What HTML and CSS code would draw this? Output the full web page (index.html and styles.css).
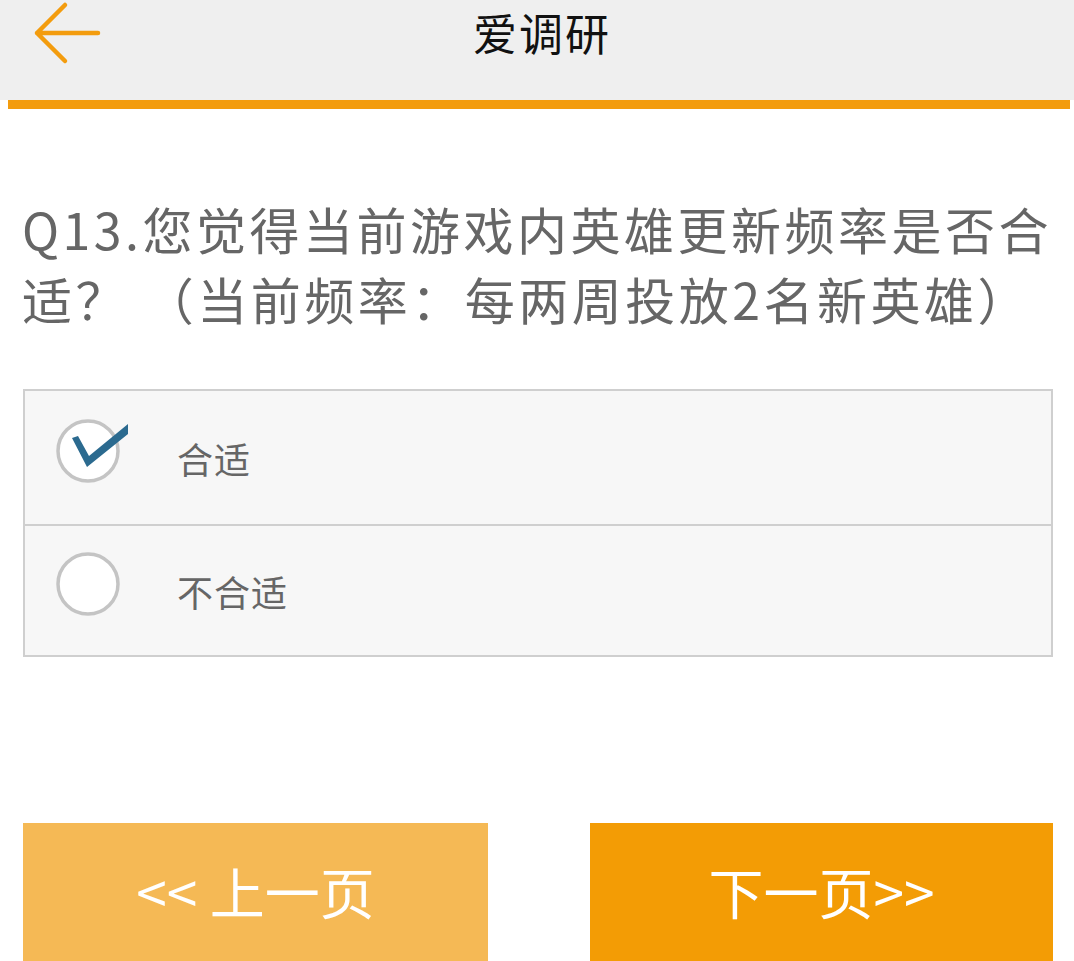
FILE: index.html
```html
<!DOCTYPE html>
<html lang="zh-CN">
<head>
  <meta name="viewport" content="width=device-width, initial-scale=1.0" />
  <title>爱调研</title>
  <link rel="stylesheet" href="styles.css">
</head>
<body>

  <div class="topbar">
    <a class="back" href="#">
      <svg width="80" height="70" viewBox="0 0 80 70">
        <path d="M34 5 L6 33 L34 61 M6 33 L67 33" fill="none" stroke="#f39c0e" stroke-width="4.5" stroke-linecap="round" stroke-linejoin="round"/>
      </svg>
    </a>
    <h1>爱调研</h1>
  </div>
  <div class="topline"></div>

  <p class="question">Q13.您觉得当前游戏内英雄更新频率是否合适？ （当前频率：每两周投放2名新英雄）</p>

  <div class="options">
    <label class="option">
      <span class="radio">
        <svg width="90" height="90" viewBox="0 0 90 90">
          <circle cx="43" cy="38" r="30" fill="#fff" stroke="#c4c4c4" stroke-width="3.5"/>
          <polygon points="27,25 33,23 44,43 83,11 83,21 42,54" fill="#2b6a8f"/>
        </svg>
      </span>
      <span class="text">合适</span>
    </label>
    <label class="option">
      <span class="radio">
        <svg width="90" height="90" viewBox="0 0 90 90">
          <circle cx="43" cy="38" r="30" fill="#fff" stroke="#c4c4c4" stroke-width="3.5"/>
        </svg>
      </span>
      <span class="text">不合适</span>
    </label>
  </div>

  <div class="nav">
    <button class="prev" type="button">&lt;&lt; 上一页</button>
    <button class="next" type="button">下一页&gt;&gt;</button>
  </div>

</body>
</html>
```

FILE: styles.css
```css
body {
  margin: 0;
  font-family: "Noto Sans CJK SC", "Noto Sans", sans-serif;
  background: #fff;
}

.topbar {
  position: relative;
  height: 100px;
  background: #efefef;
  display: flex;
  align-items: center;
  justify-content: center;
}

.back {
  position: absolute;
  left: 31px;
  top: 0;
}

.topbar h1 {
  margin: 0;
  margin-top: -36px;
  padding-left: 10px;
  font-size: 44px;
  font-weight: normal;
  color: #111;
  letter-spacing: 2px;
}

.topline {
  height: 9px;
  margin: 0 4px 0 8px;
  background: #f39c0e;
}

.question {
  margin: 84px 0 0 22px;
  font-size: 50px;
  line-height: 70px;
  letter-spacing: 3.5px;
  color: #666;
}

.options {
  margin: 56px 21px 0 23px;
  border: 2px solid #cfcfcf;
  background: #f7f7f7;
}

.option {
  display: flex;
  align-items: center;
  height: 133px;
  padding-left: 20px;
}

.option + .option {
  border-top: 2px solid #cfcfcf;
  height: 129px;
}

.radio {
  display: flex;
  width: 90px;
  height: 90px;
}

.text {
  margin-left: 42px;
  font-size: 36px;
  color: #666;
  letter-spacing: 1px;
}

.nav {
  display: flex;
  justify-content: space-between;
  margin: 166px 21px 0 23px;
}

.nav button {
  height: 140px;
  border: none;
  font-family: inherit;
  font-size: 55px;
  color: #fff;
  padding: 0 0 6px;
}

.prev {
  width: 465px;
  background: #f5b955;
}

.next {
  width: 463px;
  background: #f39c05;
}
```
